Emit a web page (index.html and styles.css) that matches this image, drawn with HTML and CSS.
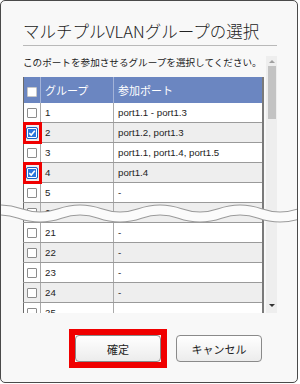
FILE: index.html
```html
<!DOCTYPE html>
<html lang="ja">
<head>
    <meta charset="UTF-8">
    <title>マルチプルVLANグループの選択</title>
    <link rel="stylesheet" href="styles.css">
</head>
<body>

    <div class="dialog">
        <h1 class="title">マルチプルVLANグループの選択</h1>

        <div class="scroll">
            <div class="scroll-body">
                <p class="lead">このポートを参加させるグループを選択してください。</p>

                <table class="groups">
                    <thead>
                        <tr>
                            <th class="col-check"><span class="box"></span></th>
                            <th class="col-group">グループ</th>
                            <th>参加ポート</th>
                        </tr>
                    </thead>
                    <tbody>
                        <tr><td class="col-check"><span class="box"></span></td><td>1</td><td>port1.1 - port1.3</td></tr>
                        <tr><td class="col-check marked"><span class="box checked"></span></td><td>2</td><td>port1.2, port1.3</td></tr>
                        <tr><td class="col-check"><span class="box"></span></td><td>3</td><td>port1.1, port1.4, port1.5</td></tr>
                        <tr><td class="col-check marked"><span class="box checked"></span></td><td>4</td><td>port1.4</td></tr>
                        <tr><td class="col-check"><span class="box"></span></td><td>5</td><td>-</td></tr>
                        <tr><td class="col-check"><span class="box"></span></td><td>6</td><td>-</td></tr>
                        <tr><td class="col-check"><span class="box"></span></td><td>21</td><td>-</td></tr>
                        <tr><td class="col-check"><span class="box"></span></td><td>22</td><td>-</td></tr>
                        <tr><td class="col-check"><span class="box"></span></td><td>23</td><td>-</td></tr>
                        <tr><td class="col-check"><span class="box"></span></td><td>24</td><td>-</td></tr>
                        <tr><td class="col-check"><span class="box"></span></td><td>25</td><td>-</td></tr>
                    </tbody>
                </table>
            </div>

            <div class="scrollbar">
                <span class="sb-arrow up"></span>
                <span class="sb-thumb"></span>
                <span class="sb-arrow down"></span>
            </div>
        </div>

        <div class="actions">
            <span class="mark-frame"><button class="btn">確定</button></span>
            <button class="btn">キャンセル</button>
        </div>

        <!-- 省略を示す波線 -->
        <svg class="cut" width="302" height="28" viewBox="0 0 302 28">
            <path d="M-20,13.5 q20,-7 40,0 t40,0 t40,0 t40,0 t40,0 t40,0 t40,0 t40,0 t40,0" fill="none" stroke="#9a9a9a" stroke-width="11"/>
            <path d="M-20,13.5 q20,-7 40,0 t40,0 t40,0 t40,0 t40,0 t40,0 t40,0 t40,0 t40,0" fill="none" stroke="#fbfbfb" stroke-width="9"/>
        </svg>
    </div>

</body>
</html>
```

FILE: styles.css
```css
/* --- BASE --- */
body {
    margin: 0;
    background: #ffffff;
    font-family: "Noto Sans CJK JP", "Noto Sans", sans-serif;
    color: #222;
}

/* --- DIALOG FRAME --- */
.dialog {
    position: relative;
    width: 298px;
    height: 383px;
    box-sizing: border-box;
    border: 1px solid #4a4a4a;
    border-radius: 5px;
    background: #f8f8f8;
    padding: 20px 20px 0 22px;
    overflow: hidden;
}

.title {
    margin: 0;
    font-size: 16.5px;
    font-weight: 300;
    line-height: 20px;
    padding-bottom: 4px;
    border-bottom: 1px solid #b9b9b9;
    white-space: nowrap;
}

/* --- SCROLL AREA --- */
.scroll {
    display: flex;
    height: 257px;
    margin-top: 10px;
}

.scroll-body {
    flex: 1;
    overflow: hidden;
}

.lead {
    margin: 0 0 8px;
    font-size: 9.6px;
    line-height: 13px;
    white-space: nowrap;
}

.scrollbar {
    width: 11px;
    display: flex;
    flex-direction: column;
    align-items: center;
    background: #eeeeee;
}

.sb-arrow {
    width: 0;
    height: 0;
    border-left: 3px solid transparent;
    border-right: 3px solid transparent;
}

.sb-arrow.up {
    margin-top: 4px;
    border-bottom: 3px solid #a0a0a0;
}

.sb-arrow.down {
    margin-top: auto;
    margin-bottom: 6px;
    border-top: 3px solid #333;
}

.sb-thumb {
    width: 8px;
    height: 53px;
    margin-top: 3px;
    background: #c3c3c3;
}

/* --- TABLE --- */
.groups {
    width: 241px;
    border-collapse: collapse;
    table-layout: fixed;
    border-left: 1px solid #6a6a6a;
    border-right: 2px solid #7a7a7a;
}

.groups th {
    height: 26px;
    padding: 0 4px;
    background: #6b86c1;
    color: #fff;
    font-size: 11px;
    font-weight: normal;
    text-align: left;
    border-right: 1px solid #a3b3d8;
}

.groups td {
    height: 19px;
    padding: 0 4px;
    font-family: "Liberation Sans", Arial, sans-serif;
    font-size: 9.7px;
    border-bottom: 1px solid #9a9a9a;
    border-right: 1px solid #aaaaaa;
    background: #ffffff;
    white-space: nowrap;
}

.groups tbody tr:nth-child(even) td {
    background: #eeeeee;
}

.groups .col-check {
    width: 16px;
    padding: 0;
    text-align: center;
}

.groups .col-group {
    width: 73px;
    box-sizing: border-box;
}

.box {
    display: inline-block;
    vertical-align: middle;
    width: 8px;
    height: 8px;
    border: 1px solid #8c8c8c;
    border-radius: 1px;
    background: #fff;
}

th .box {
    border-color: #c8c8c8;
}

.box.checked {
    width: 8px;
    height: 8px;
    border: 1px solid #fff;
    outline: 1px solid #1c5fc4;
    background: #2a74dc url("data:image/svg+xml,%3Csvg xmlns='http://www.w3.org/2000/svg' width='8' height='8'%3E%3Cpath d='M1.3 4.2 L3.2 6 L6.8 1.8' fill='none' stroke='white' stroke-width='1.6'/%3E%3C/svg%3E") center / 8px 8px no-repeat;
}

.groups td.marked {
    outline: 3px solid #f00000;
    outline-offset: -2px;
}

/* --- BUTTONS --- */
.actions {
    display: flex;
    align-items: flex-start;
    gap: 9px;
    margin: 16px 0 0 46px;
}

.mark-frame {
    display: flex;
    border: 6px solid #f00000;
}

.actions > .btn {
    margin-top: 6px;
}

.btn {
    width: 86px;
    height: 27px;
    border: 1px solid #8a8a8a;
    border-radius: 4px;
    background: linear-gradient(#ffffff, #ececec);
    font-family: "Noto Sans CJK JP", sans-serif;
    font-size: 11px;
    color: #222;
    padding: 0;
}

/* --- BREAK MARK --- */
.cut {
    position: absolute;
    left: -1px;
    top: 199px;
}
```
